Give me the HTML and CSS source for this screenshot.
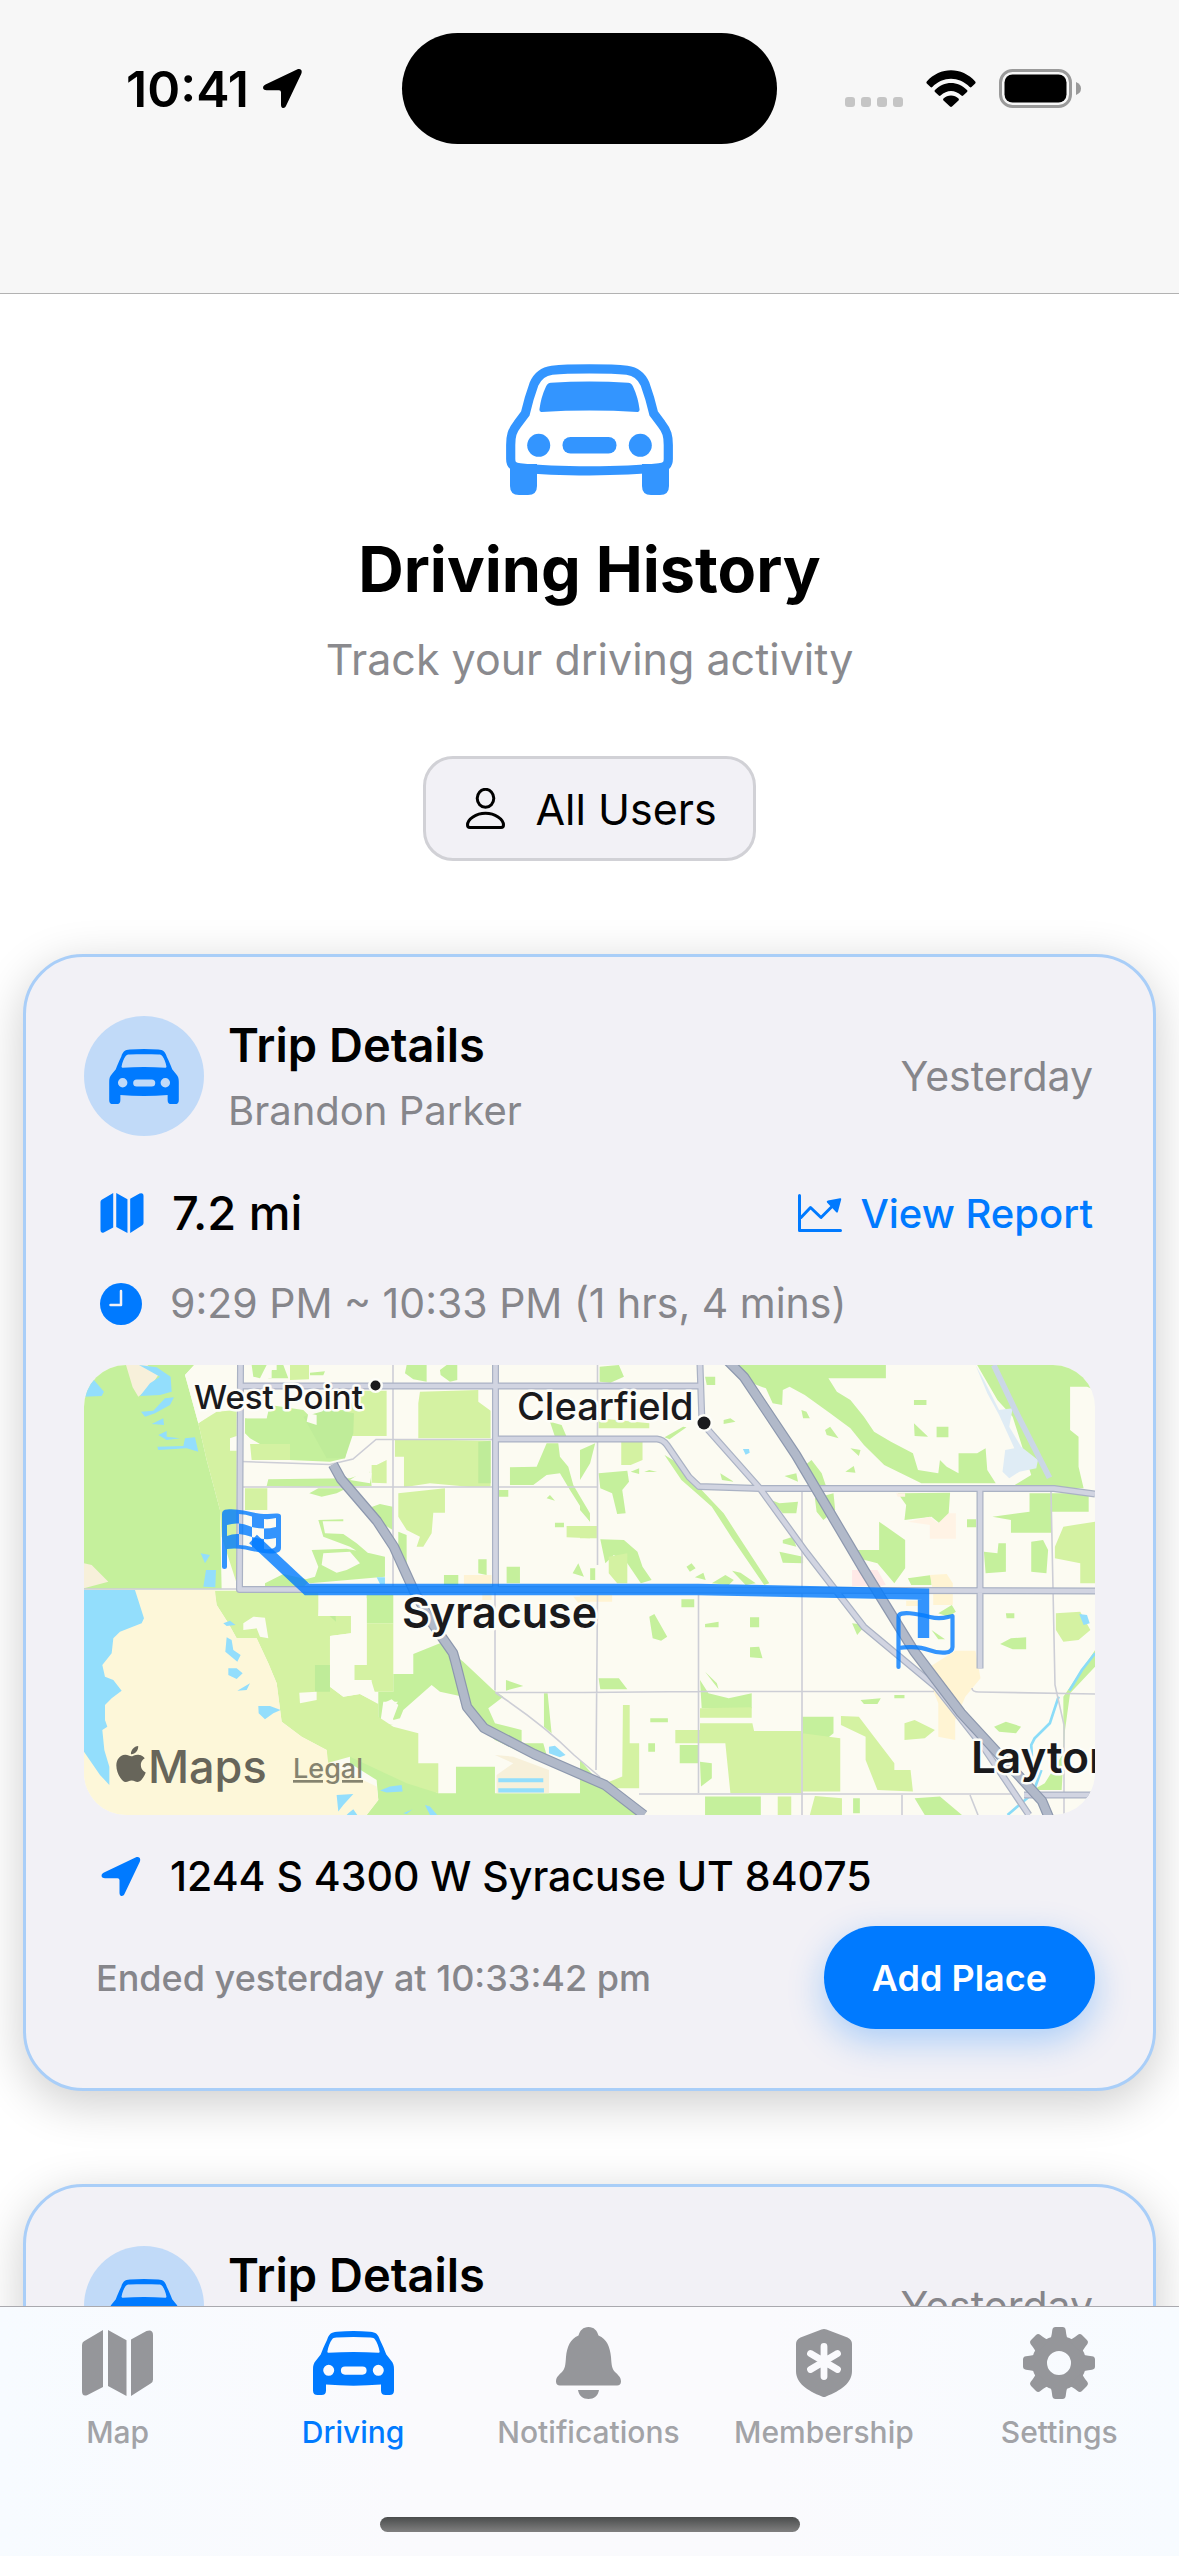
FILE: index.html
```html
<!DOCTYPE html>
<html lang="en">
<head>
<meta charset="utf-8">
<meta name="viewport" content="width=device-width, initial-scale=1">
<title>Driving History</title>
<link rel="stylesheet" href="styles.css">
</head>
<body>
<svg class="defs" aria-hidden="true">
  <symbol id="car-fill" viewBox="0 0 81 64">
    <path fill-rule="evenodd" d="M14 9C16 3 18 1.200 24 .7 35-.2 46-.2 57 .7 63 1.200 65 3 67 9 70 15 71.500 19 73.300 23.500L78 29.500C80.500 32.500 81 34.500 81 38.500V59.500C81 62.500 79.500 64 76.500 64H72.500C69.500 64 68 62.500 68 59.500V53.500C50 55 31 55 13 53.500V59.500C13 62.500 11.500 64 8.500 64H4.500C1.500 64 0 62.500 0 59.500V38.500C0 34.500 .5 32.500 3 29.500L7.700 23.500C9.500 19 11 15 14 9ZM19 8.500C17 11 15.200 16 14.400 20.500 14.300 21.500 14.700 21.800 15.600 21.700 32 20.700 49 20.700 65.400 21.700 66.300 21.800 66.700 21.500 66.600 20.500 65.800 16 64 11 62 8.500 61 7 60 6.600 57.500 6.500 46 5.800 35 5.800 23.500 6.500 21 6.600 20 7 19 8.500ZM15.700 33.800A5.500 5.500 0 1 0 15.700 44.800 5.500 5.500 0 1 0 15.700 33.800ZM65.300 33.800A5.500 5.500 0 1 0 65.300 44.800 5.500 5.500 0 1 0 65.300 33.800ZM32 35.500A4 4 0 0 0 32 43.700H49.500A4 4 0 0 0 49.500 35.500Z"/>
  </symbol>
  <symbol id="map-fill" viewBox="0 0 71 66">
    <path d="M21 0V57L5.500 65Q0 67 0 61V15Q0 12.500 2 11.300ZM26 0 44.500 10.300V66L26 56ZM49 9.500 64.500 1Q71-1 71 5V49.500Q71 52 69 53.300L49 66Z"/>
  </symbol>
  <symbol id="arrow-fill" viewBox="0 0 39 39">
    <path d="M34 .6 2.500 15.600C.3 16.800-.2 18.300.2 19.600.6 20.800 1.800 21.200 3.500 21.200H16Q18 21.200 18 23.200V35.500C18 37.300 18.400 38.500 19.700 38.900 21 39.200 22.200 38.600 23.200 36.500L38.200 5C39.800 1.500 37.500-1 34 .6Z"/>
  </symbol>
</svg>

<div class="app">
  <header class="topbar">
    <div class="status">
      <div class="status-side status-left">
        <span class="clock">10:41</span>
        <svg class="status-arrow" viewBox="0 0 39 39"><use href="#arrow-fill"/></svg>
      </div>
      <div class="island"></div>
      <div class="status-side status-right">
        <svg class="dots" viewBox="0 0 58 37"><rect y="27" width="10" height="10" rx="3"/><rect x="16" y="27" width="10" height="10" rx="3"/><rect x="32" y="27" width="10" height="10" rx="3"/><rect x="48" y="27" width="10" height="10" rx="3"/></svg>
        <svg class="wifi" viewBox="0 0 50 37"><path d="M.8 11.500C14-3.500 36-3.500 49.200 11.500Q50 12.500 49.200 13.400L45.500 17Q44.600 17.800 43.700 17C33 6 17 6 6.300 17Q5.400 17.800 4.500 17L.8 13.400Q0 12.500.8 11.500ZM9 20C18 10.500 32 10.500 41 20Q41.900 21 41 22L37.200 25.500Q36.300 26.300 35.400 25.500C29 19.500 21 19.500 14.600 25.500Q13.700 26.300 12.800 25.500L9 22Q8.100 21 9 20ZM17.500 28.500C21.500 24.500 28.500 24.500 32.500 28.500Q33.300 29.500 32.500 30.400L26 36.600Q25 37.400 24 36.600L17.500 30.400Q16.700 29.500 17.500 28.500Z"/></svg>
        <svg class="battery" viewBox="0 0 82 39"><rect x="1.500" y="1.500" width="70" height="36" rx="12" fill="none" stroke="#9a9a9a" stroke-width="3"/><rect x="5.500" y="5.500" width="62" height="28" rx="8"/><path d="M77 13Q82 15 82 19.500T77 26Z" fill="#9a9a9a"/></svg>
      </div>
    </div>
  </header>

  <main class="content">
    <section class="hero">
      <svg class="hero-car" viewBox="0 0 167 131">
        <path fill="none" stroke="currentColor" stroke-width="9.200" d="M83.500 4.800C68 4.800 55 5.200 46 6.200 36 7.500 31 13 28 20 24 31 21.500 40 19.300 49.500L11.500 60C6 67 4.700 72 4.700 81V95C4.700 101 7.500 103.200 14 103.800 34 106 60 106.800 83.500 106.800S133 106 153 103.800C159.500 103.200 162.300 101 162.300 95V81C162.300 72 161 67 155.500 60L147.700 49.500C145.500 40 143 31 139 20 136 13 131 7.500 121 6.200 112 5.200 99 4.800 83.500 4.800Z"/>
        <path d="M45 18.700Q83.500 16.400 122 18.700 125.500 19 127 22.500 132 33 133.600 45.500 133.700 48 131.500 47.900 83.500 45 35.500 47.900 33.300 48 33.400 45.500 35 33 40 22.500 41.500 19 45 18.700ZM4 100H31V122Q31 131 22 131H13Q4 131 4 122ZM136 100H163V122Q163 131 154 131H145Q136 131 136 122Z"/>
        <circle cx="32.700" cy="81.300" r="11.500"/><circle cx="134.300" cy="81.300" r="11.500"/><rect x="56.500" y="73" width="54" height="16.500" rx="8"/>
      </svg>
      <h1 class="hero-title">Driving History</h1>
      <p class="hero-sub">Track your driving activity</p>
      <button class="filter" type="button">
        <svg class="person" viewBox="0 0 39 41"><ellipse cx="19.500" cy="10.300" rx="8.300" ry="9"/><path d="M19.500 25.300C29 25.300 37.500 31 37.500 37Q37.500 39.500 35 39.500H4Q1.500 39.500 1.500 37C1.500 31 10 25.300 19.500 25.300Z"/></svg>
        <span>All Users</span>
      </button>
    </section>

    <section class="trips">
      <article class="card">
        <div class="card-head">
          <span class="badge"><svg class="badge-car"><use href="#car-fill"/></svg></span>
          <div class="who">
            <h2 class="card-title">Trip Details</h2>
            <p class="name">Brandon Parker</p>
          </div>
          <span class="muted">Yesterday</span>
        </div>
        <div class="row stats">
          <svg class="icon-map"><use href="#map-fill"/></svg>
          <span class="distance">7.2 mi</span>
          <a class="report" href="#report">
            <svg class="icon-chart" viewBox="0 0 44 38"><path fill="none" stroke="currentColor" stroke-width="3" stroke-linecap="round" stroke-linejoin="round" d="M1.500 1.500V36.500H42.500M3 23.500 12.500 13.500 23 23.500 36 10.500"/><path fill="currentColor" d="M29 8.500Q28 7 30 6.500L42 4.200Q43.500 4 43.200 5.500L40 17.500Q39.500 19.500 38 18Z"/></svg>
            <span>View Report</span>
          </a>
        </div>
        <div class="row times">
          <svg class="icon-clock" viewBox="0 0 42 42"><circle cx="21" cy="21" r="21" fill="#007aff"/><path fill="none" stroke="#f2f1f6" stroke-width="2.500" stroke-linecap="round" stroke-linejoin="round" d="M21 8V22H10.500"/></svg>
          <span class="muted">9:29 PM ~ 10:33 PM (1 hrs, 4 mins)</span>
        </div>

        <svg class="map" viewBox="0 0 1011 450" role="img" aria-label="Route map">
          <rect width="1011" height="450" fill="#fcfbf2"/>
          <!-- land cover, west half -->
          <g transform="translate(-14 -15) scale(.3333)">
            <g fill="#c5f09c">
              <path d="M42 45H372L345 75 352 100 385 220 410 330 450 480 455 718H42Z"/>
              <path d="M545 45H590L570 85 550 80ZM595 85H655L640 45H620V60H605ZM720 68L765 64 760 76H720ZM1010 45H1070V95L1030 88 1005 70ZM1110 60 1130 45H1162V90L1140 95 1112 75ZM525 205H590L600 165 700 180 740 220 760 180 850 180 845 240 825 325 780 335 660 330 660 282 570 282 540 265 525 250ZM595 388 840 385 900 365 905 408 720 410 590 408ZM718 430 745 415H830L800 430 755 440ZM880 480 930 462 968 470V540L920 510ZM725 600 830 596 900 610 945 620V680L720 700 700 690 735 680 745 650ZM745 510 820 508 820 514H758L765 550 820 552 860 580 895 610 880 615 840 590 760 560ZM585 700 640 672 720 690 700 712H585ZM985 545 1010 555V640L985 600ZM1225 628H1250V675L1225 670ZM1122 675H1165V705H1122ZM1320 352 1400 350 1430 280 1465 280 1470 320 1495 350 1510 405 1560 490V515L1500 420 1470 370 1430 375 1390 405 1320 405ZM1440 215 1475 225 1490 260H1455ZM1285 420H1315V440H1285ZM1430 445 1440 435 1455 452ZM1455 518H1482V532H1455ZM1310 650H1350V700H1310ZM1508 670 1525 640 1542 680ZM890 735H970V820H890ZM760 780 795 765 798 815 760 810ZM690 768H742V796H690ZM800 880 842 890 820 905 795 895ZM1030 912 1110 880 1180 935 1270 1020 1300 1040 1255 1075 1275 1120 1355 1140V1180L1420 1180 1430 1215 1370 1215 1275 1170 1210 1110 1180 1040 1110 1025 1085 1005 1000 1080 990 1105 970 1110 965 1070 985 1055 940 1055 930 1125 970 1125 925 1120 925 1025H970V972H1030ZM735 945H780V1025H735ZM1308 990 1360 1008 1308 1022ZM1422 1030H1433L1440 1100 1445 1150 1422 1130ZM840 1215 1010 1285 1105 1330 1158 1330V1250H1275V1330H1560V1395H890L925 1350 920 1290 840 1240Z"/>
            </g>
            <g fill="#d4f2a2">
              <path d="M385 220 440 185 500 180V258L480 265V302H500V700L455 560 450 480 410 330ZM660 45H717V88L660 90ZM528 300 540 282H660V330H528ZM525 415H592V480H525ZM830 180 870 122H950V258H830ZM1050 125 1225 120V155L1262 182V265H1045V160ZM1000 268 1262 272V410H1195L1080 400 1002 412V320H975V270ZM905 345H920L950 330V400L905 398ZM985 430 1125 415V488H1090L1085 550 1060 590 1040 590 1050 560 1010 540 985 500ZM1490 528H1560V565L1490 562ZM433 722H745V798H843V850L780 858V1010L820 1040 870 1032 925 1062V1100L970 1130 1045 1150V1240H1105V1330L1010 1300 840 1220 770 1240V1200L695 1160 635 1115 620 1000 595 940 560 865H500L475 820 440 765ZM853 945H890V820H970V1025H905V990H853Z"/>
            </g>
            <path fill="#bfec99" d="M700 200 770 325 825 325 850 250 852 190 780 178ZM1262 272 1225 275V400H1262ZM760 780 795 765 798 815ZM735 945H780V1025H735Z"/>
            <path fill="#fcfbf2" d="M345 75 375 45 400 60 410 100 440 180 385 220 355 110ZM545 178H590V205H530ZM715 190 740 195V225L710 215ZM590 60H605V84H590ZM525 285 540 280 545 330H525ZM525 340 660 345V375L590 380V388H525ZM840 390 885 360 905 370 900 400ZM760 610 840 605 870 640 830 660 800 668 755 645ZM520 820 550 800 585 803 595 865 570 860 560 835 520 840ZM688 1028 740 1025V1050L690 1060ZM940 1060 965 1048 985 1065 970 1105 940 1080ZM750 745H890V945H853V990L905 995 925 1060 870 1032 820 1040 780 1010V858L843 850V798H745Z"/>
            <path fill="#f7f0da" d="M168 45H232L265 75 240 112 205 140 188 112ZM42 640 65 645 115 695 42 715ZM1275 1215 1330 1220 1437 1260V1330H1280V1275L1330 1240Z"/>
            <path fill="#fdf7d9" d="M42 720H435L440 765 475 820 500 865H560L595 940 620 1000 635 1115 695 1160 770 1200 775 1240 920 1310 925 1350 890 1395H42Z"/>
            <path fill="#ffefc8" opacity=".7" d="M1182 675H1265V750H1237V710H1182ZM1510 740H1560V765H1530Z"/>
            <path fill="#93defc" d="M42 85 70 88 102 125 95 138 42 140ZM207 45 260 52 302 80 305 125 270 135 210 138 240 100 270 80ZM213 185 250 182 285 145 312 142 300 165 255 190 225 200ZM245 222 280 205 282 225ZM265 255 290 243 290 260 330 265 290 270ZM262 290 340 288 345 265 375 262 385 305 350 295 265 300ZM392 610 420 615 405 640ZM408 660H438L436 712 400 710ZM920 682H945V702H930ZM42 720H195L222 805 215 820 150 845 130 865 125 910 97 945 105 980 130 990 155 1022 125 1045 105 1065V1110L112 1130 97 1140 103 1200 118 1250V1305L90 1275 42 1205ZM460 820 480 812 497 825 470 828ZM470 862 485 870 490 900 512 915 502 935 466 905ZM475 955 500 955 518 970 500 987 475 975ZM502 1022 540 1000 530 1020ZM565 1068 600 1068 632 1080 610 1090 585 1108 566 1090ZM800 1335 850 1332 820 1365 805 1385ZM835 1390 850 1378 862 1395H830ZM930 1322 960 1310 995 1305 998 1325 950 1328ZM1000 1390 1028 1378 1010 1392ZM1065 1365 1080 1370 1102 1395H1080ZM1285 1285H1420V1297H1285ZM1285 1315H1422V1328H1285ZM1437 1190 1455 1187 1487 1215 1470 1222 1437 1210Z"/>
          </g>
          <!-- land cover, east half -->
          <g transform="translate(496 -15) scale(.338 .3333)">
            <g fill="#c5f09c">
              <path d="M465 45H905V85H735L760 125 800 150 840 200 870 245 920 275 985 310 1000 360 1060 370 1065 330 1085 350 1120 370 1120 310H1175L1200 295 1205 360 1230 400H1010L900 345 840 285 800 235 740 190 665 135 620 110 600 120 598 165 570 160 550 115 510 100ZM1175 45H1430Q1490 60 1524 120L1500 110H1450V240L1475 260V350L1490 415H1270L1335 375 1280 200 1235 150ZM58 50 115 45 130 80 90 98 58 95ZM370 80H400V105H375ZM250 262 305 230 315 232 265 268ZM425 210 445 205 460 215 425 222ZM655 180 670 185 680 205 660 205ZM725 240 740 230 765 265 730 255ZM988 150H1025V165H988ZM988 220 1030 260 990 258ZM1055 230H1090V262H1055ZM800 295 830 300 825 318ZM785 365 810 348 815 368ZM660 350 685 330 715 370 730 415 690 400ZM415 370 455 395 420 390ZM605 378 640 370 645 395ZM250 315 275 330 355 415 425 490 470 560 560 700 545 705 450 565 390 470 345 430 300 390ZM55 370 140 362 145 395 125 420 135 490 110 492 95 430 60 415ZM205 360 228 366H190ZM150 365 175 355V372ZM590 460 645 455 640 490 600 490 565 450ZM695 445 750 430 755 480 720 510 700 485ZM600 570 630 560 640 590 600 580ZM590 605 660 620V640L600 638ZM885 515 962 570V655L930 700 880 640 805 620V600H885ZM940 430 1095 428 1090 500 1070 525 1040 500 960 510 965 465ZM1145 508H1172V532H1145ZM1220 500 1330 485V430H1505V485H1395V548H1275V510ZM1195 605 1235 610 1238 580H1260V665L1200 670ZM1335 575 1370 570 1385 600 1380 670 1335 665ZM60 568 130 570 170 605 185 650 212 690 180 700 140 640 100 615 75 640ZM315 650 330 640 342 655 325 665ZM340 682 365 668 372 690ZM390 700 430 675 455 690 440 705ZM450 662 475 668 520 700 490 705ZM970 685 1040 675V705H980ZM300 748H338V772H300ZM370 822 410 815V832H370ZM503 802H530V832H503ZM205 800 220 792 258 860 240 872 215 865ZM503 892 530 890 540 925 503 922ZM55 985H115L140 1018 60 1018ZM370 965 405 1000 410 1018ZM355 990 380 1030 440 1045 508 1030V1075H360ZM805 820 845 825 820 855ZM1040 840 1080 868H1060ZM1060 790 1100 765 1112 785 1090 800ZM1260 790H1285V805H1262ZM1243 882 1275 865 1320 862V898H1280ZM1225 1130 1260 1115 1305 1130 1290 1150 1240 1145ZM830 1050 890 1045 880 1062H840ZM930 1035H960V1045H930ZM0 300 45 280 30 340 0 390ZM0 460 20 475 30 515 0 480ZM30 655H45V690H30ZM0 1230 60 1300 170 1395H0ZM295 1185H350V1240H295ZM202 1180H222V1205H202ZM208 1105H260V1117H208ZM355 1235 390 1240V1285L358 1310ZM658 1100H750V1150L700 1190 660 1170ZM370 1340H535V1395H370ZM990 1345 1065 1340 1130 1395H1020ZM808 1345H828V1390H808ZM1375 1300 1430 1210 1430 1040 1524 900 1524 950 1450 1030 1435 1140 1425 1320 1340 1320ZM1505 100H1524V140Z"/>
            </g>
            <g fill="#d4f2a2">
              <path d="M55 205 205 220V235H55ZM122 275H185V330L150 345H122ZM0 528H50V565H0ZM85 620 140 610V700H110L85 670ZM355 1075 508 1072V1103H355ZM127 1065H147V1180H175V1315H75V1300L125 1280ZM282 1140H355V1180H282ZM355 1120H510L515 1143H655V1330H445L430 1180H355ZM658 1150 770 1165V1325H658ZM772 1098 825 1100 870 1160 930 1240V1260H978L985 1325 880 1320 845 1230V1160L772 1125ZM960 1120 990 1110 1050 1140 1020 1165 960 1170ZM585 1340H625V1395H585ZM695 1338 775 1345V1395H680ZM1405 590 1430 530 1524 515V700H1480V640L1405 625ZM1408 790 1480 785 1510 840 1475 870 1430 875 1408 840Z"/>
            </g>
            <path fill="#fff4d3" d="M1035 675 1085 672 1103 700V765H1045V725ZM1110 902H1170L1185 985 1140 1040 1110 1110V1170L1060 1160 1060 1060 1020 960ZM965 752H1000V768H965ZM0 735H95V755H0Z"/>
            <path fill="#fff3e5" d="M970 515 1035 500 1060 520 1090 490H1112V566H1035V525ZM935 430H962V440H940Z"/>
            <path fill="#ffe9e7" d="M805 660H880L905 705 890 708H805Z"/>
            <path fill="#dfecf5" d="M1170 45 1195 90 1240 180 1280 175 1270 230 1305 290 1355 330 1350 355 1300 365 1270 385 1250 365 1258 300 1285 295 1240 195 1205 130Z"/>
            <path fill="none" stroke="#cbd7e6" stroke-width="17" d="M1224 45 1290 185 1389 383"/>
            <path fill="#93defc" d="M482 297H500L502 308 490 314ZM1477 792 1500 795 1508 820 1490 825Z"/>
            <path fill="none" stroke="#8adcf8" stroke-width="8" d="M1524 910 1485 960 1448 1022M1416 1040 1390 1120 1345 1165 1335 1185 1337 1220M1365 1260 1340 1330 1265 1395"/>
          </g>
          <!-- minor streets -->
          <g fill="none" stroke="#cdced6" stroke-width="1.600">
            <path d="M0 224H154M157 96.500 246 99.500 269 94 292 74.500H409M157 122H513M309 0V224M411 225V325.500M411 327.500H500L614 326.500H850M412 328Q460 360 490 390L516 412M513.500 0V200M513.500 230 512 405M614.500 230V428M718 127V450M967 127 971 320 980 360V450M888 323Q888 327 895 327L1011 329M555 429H933M818 430V450M886 430 894 450"/>
          </g>
          <!-- main roads with casing -->
          <g fill="none" stroke-linejoin="round">
            <path stroke="#aab2c4" stroke-width="7" d="M156.500 0 155.500 224.500H412L1011 226M157 21H616M411.500 0V224M616 0 618 58M412 74H573Q579 74.500 583 80L605 112 615 121.500 676 123.500H970L1011 129M896 123.500V303.500M618 58 676 123.500 722 187 780 262 852 322 900 383 945 450M940 430H1011"/>
            <path stroke="#d1d4e1" stroke-width="4.600" d="M156.500 0 155.500 224.500H412L1011 226M157 21H616M411.500 0V224M616 0 618 58M412 74H573Q579 74.500 583 80L605 112 615 121.500 676 123.500H970L1011 129M896 123.500V303.500M618 58 676 123.500 722 187 780 262 852 322 900 383 945 450M940 430H1011"/>
            <path stroke="#8d98ae" stroke-width="10.400" d="M249 99.500 257 114 293 156 310 182 330 226 348 258 369 288 371 295 383 342 400 363 450 389 521 420 560 450M643-5 660 12 712 90 780 205 830 286 877 348 958 436 966 455"/>
            <path stroke="#b1b9c9" stroke-width="8" d="M249 99.500 257 114 293 156 310 182 330 226 348 258 369 288 371 295 383 342 400 363 450 389 521 420 560 450M643-5 660 12 712 90 780 205 830 286 877 348 958 436 966 455"/>
          </g>
          <!-- finish and start flags -->
          <path fill="#007aff" fill-opacity=".8" fill-rule="evenodd" d="M138 149Q138 144.500 143 144.500C160 143 170 151 192 148.500Q197 148 197 151V183Q197 187 192 188C176 191 162 181 143 184V202Q143 204 140.500 204T138 202ZM143 160V171Q149 168.500 155 169V158.500Q149 158 143 160ZM155 149V158.500Q161 159 168 162V151.500Q162 149 155 149ZM168 162V172Q174 174 180 174V163.500Q174 163.500 168 162ZM180 154V163.500Q186 163.500 192 162V153Q186 154.500 180 154ZM155 169V180Q161 180 168 182V172Q161 169.500 155 169ZM180 174V184Q186 185 190 183Q192 182 192 180V173Q186 174.500 180 174Z"/>
          <path fill="none" stroke="#007aff" stroke-opacity=".8" stroke-width="4.200" stroke-linecap="round" stroke-linejoin="round" d="M814.500 302V252C814.500 245 834 249 846 252S862 252 868.500 251V282C868.500 289 856 289 845 285S820 282 815 283"/>
          <path fill="none" stroke="#007aff" stroke-opacity=".8" stroke-width="11.400" d="M169 174 223 224.500H614L839.500 229V273"/>
          <!-- place names -->
          <g class="places">
            <text x="110" y="44" font-size="33">West Point</text>
            <text x="433" y="55" font-size="38">Clearfield</text>
            <text class="strong" x="318" y="263" font-size="43">Syracuse</text>
            <text class="strong" x="887" y="408" font-size="44">Layton</text>
            <circle cx="291.500" cy="20.500" r="5"/><circle cx="620" cy="58" r="6.500"/>
          </g>
          <g fill="#67655a">
            <path transform="translate(29 381) scale(1.500)" d="M12.152 6.896c-.948 0-2.415-1.078-3.960-1.040-2.040.027-3.910 1.183-4.961 3.014-2.117 3.675-.546 9.103 1.519 12.090 1.013 1.454 2.208 3.090 3.792 3.039 1.520-.065 2.090-.987 3.935-.987 1.831 0 2.350.987 3.960.948 1.637-.026 2.676-1.480 3.676-2.948 1.156-1.688 1.636-3.325 1.662-3.415-.039-.013-3.182-1.221-3.220-4.857-.026-3.040 2.480-4.494 2.597-4.559-1.429-2.090-3.623-2.324-4.390-2.376-2-.156-3.675 1.090-4.610 1.090zM15.530 3.830c.843-1.012 1.400-2.427 1.245-3.830-1.207.052-2.662.805-3.532 1.818-.780.896-1.454 2.338-1.273 3.714 1.338.104 2.715-.688 3.559-1.701"/>
            <text class="brand" x="64" y="418" font-size="45">Maps</text>
            <a href="#legal"><text class="legal" x="209" y="413" font-size="27">Legal</text></a>
          </g>
        </svg>

        <div class="row address">
          <svg class="icon-arrow"><use href="#arrow-fill"/></svg>
          <span class="street">1244 S 4300 W Syracuse UT 84075</span>
        </div>
        <div class="card-foot">
          <span class="ended">Ended yesterday at 10:33:42 pm</span>
          <button class="add" type="button">Add Place</button>
        </div>
      </article>

      <article class="card">
        <div class="card-head">
          <span class="badge"><svg class="badge-car"><use href="#car-fill"/></svg></span>
          <div class="who">
            <h2 class="card-title">Trip Details</h2>
            <p class="name">Brandon Parker</p>
          </div>
          <span class="muted">Yesterday</span>
        </div>
      </article>
    </section>
  </main>

  <nav class="tabbar">
    <div class="tabs">
      <a class="tab" href="#map"><span class="tab-icon"><svg class="t-map"><use href="#map-fill"/></svg></span>Map</a>
      <a class="tab active" href="#driving" aria-current="page"><span class="tab-icon"><svg class="t-car"><use href="#car-fill"/></svg></span>Driving</a>
      <a class="tab" href="#notifications"><span class="tab-icon"><svg class="t-bell" viewBox="0 0 65 72"><path d="M32.500 0C38 0 41 3.500 42.500 8.500 51 12 54 20 55 30 55.500 38 56 42 59 45 62 48 65 50 65 54.500 65 57 63.500 58.500 61 58.500H4C1.500 58.500 0 57 0 54.500 0 50 3 48 6 45 9 42 9.500 38 10 30 11 20 14 12 22.500 8.500 24 3.500 27 0 32.500 0ZM22 63H43C42 69 38 72 32.500 72S23 69 22 63Z"/></svg></span>Notifications</a>
      <a class="tab" href="#membership"><span class="tab-icon"><svg class="t-shield" viewBox="0 0 56 68"><path d="M25.500.5Q28-.5 30.500.5L51.500 8.500Q56 10.500 56 15V42C56 54 45 61.500 30 67.500Q28 68.500 26 67.500C11 61.500 0 54 0 42V15Q0 10.500 4.500 8.500Z"/><path stroke="#fafafd" stroke-width="6.800" stroke-linecap="round" d="M28 17.500V47.500M14.500 24.500 41.500 40.500M41.500 24.500 14.500 40.500"/></svg></span>Membership</a>
      <a class="tab" href="#settings"><span class="tab-icon"><svg class="t-gear" viewBox="0 0 72 72"><circle cx="36" cy="36" r="19.500" fill="none" stroke="currentColor" stroke-width="15"/><path id="tooth" d="M26.500 13Q28.500 11 29.300 3 29.700 0 32.500 0H39.500Q42.300 0 42.700 3 43.500 11 45.500 13Z"/><use href="#tooth" transform="rotate(45 36 36)"/><use href="#tooth" transform="rotate(90 36 36)"/><use href="#tooth" transform="rotate(135 36 36)"/><use href="#tooth" transform="rotate(180 36 36)"/><use href="#tooth" transform="rotate(225 36 36)"/><use href="#tooth" transform="rotate(270 36 36)"/><use href="#tooth" transform="rotate(315 36 36)"/></svg></span>Settings</a>
    </div>
    <div class="home-bar"></div>
  </nav>
</div>
</body>
</html>
```
FILE: styles.css
```css
* { box-sizing: border-box; }
body { margin: 0; background: #fff; color: #000; font-family: Inter, "Liberation Sans", sans-serif; }
h1, h2, p { margin: 0; }
a { text-decoration: none; }
button { font-family: inherit; cursor: pointer; }
svg { display: block; flex: none; fill: currentColor; }
.defs { position: absolute; width: 0; height: 0; }

.app { display: flex; flex-direction: column; height: 100vh; }

/* status bar */
.topbar { flex: none; height: 294px; background: #f7f7f7; border-bottom: 1px solid #b2b2b2; }
.status { display: grid; grid-template-columns: 1fr 375px 1fr; padding-top: 33px; }
.status-side { display: flex; align-items: center; height: 111px; }
.status-left { justify-content: flex-end; gap: 14px; padding-right: 100px; }
.status-right { justify-content: flex-end; gap: 23px; padding-right: 98px; }
.clock { font-size: 50px; line-height: 58px; font-weight: 600; }
.island { height: 111px; border-radius: 56px; background: #000; }
.status-arrow { width: 39px; height: 39px; }
.dots { width: 58px; height: 37px; color: #c5c5c5; }
.wifi { width: 50px; height: 37px; }
.battery { width: 82px; height: 39px; }

/* page content */
.content { flex: 1; min-height: 0; overflow-y: auto; scrollbar-width: none; }
.hero { display: flex; flex-direction: column; align-items: center; padding-top: 70px; }
.hero-car { width: 167px; height: 131px; color: #3395ff; }
.hero-title { margin-top: 35px; font-size: 63px; line-height: 78px; font-weight: 700; }
.hero-sub { margin-top: 24px; font-size: 43px; line-height: 54px; color: #8a8a8e; }
.filter { display: flex; align-items: center; gap: 30px; height: 105px; margin-top: 70px; padding: 0 36px 0 40px; border: 3px solid #d1d1d6; border-radius: 30px; background: #f2f1f6; color: #000; font-size: 43px; line-height: 54px; }
.person { width: 39px; height: 41px; fill: none; stroke: #000; stroke-width: 3px; }

.trips { display: flex; flex-direction: column; gap: 93px; padding: 93px 23px; }
.card { padding: 59px 58px; border: 3px solid #a9cef8; border-radius: 60px; background: #f2f1f6; box-shadow: 0 12px 48px rgba(0, 0, 0, .2); }
.card-head { display: flex; align-items: center; gap: 24px; padding-right: 2px; }
.badge { display: flex; align-items: center; justify-content: center; width: 120px; height: 120px; border-radius: 50%; background: #c1daf8; color: #007aff; }
.badge-car { width: 70px; height: 55px; }
.who { flex: 1; display: flex; flex-direction: column; gap: 11px; }
.card-title { font-size: 47px; line-height: 58px; font-weight: 600; }
.name { font-size: 40px; line-height: 51px; color: #86868b; }
.muted { font-size: 41px; line-height: 51px; color: #86868b; }
.row { display: flex; align-items: center; gap: 28px; padding-left: 16px; color: #007aff; }
.stats { margin-top: 48px; padding-right: 2px; }
.distance { color: #000; font-size: 47px; line-height: 58px; font-weight: 500; }
.report { display: flex; align-items: center; gap: 18px; margin-left: auto; color: #007aff; font-size: 40px; line-height: 51px; font-weight: 500; }
.icon-map { width: 44px; height: 40px; }
.icon-chart { width: 44px; height: 38px; }
.icon-clock { width: 42px; height: 42px; }
.icon-arrow { width: 42px; height: 39px; }
.times { margin-top: 36px; }
.map { width: 100%; height: auto; margin: 36px 0; border-radius: 42px; }
.places { fill: #1a1a1c; stroke: #fdfdf8; stroke-width: 5px; stroke-linejoin: round; paint-order: stroke; font-weight: 500; }
.strong { font-weight: 600; }
.brand { font-weight: 500; }
.legal { font-weight: 500; fill: #85836f; text-decoration: underline; }
.street { color: #000; font-size: 41px; line-height: 51px; font-weight: 500; }
.card-foot { display: flex; align-items: center; justify-content: space-between; margin-top: 24px; padding-left: 12px; }
.ended { font-size: 36px; line-height: 44px; font-weight: 500; color: #86868b; }
.add { height: 103px; padding: 0 48px; border: 0; border-radius: 52px; background: #007aff; color: #fff; font-size: 36px; line-height: 44px; font-weight: 600; box-shadow: 0 12px 36px rgba(0, 122, 255, .3); }

/* bottom tabs */
.tabbar { flex: none; display: flex; flex-direction: column; align-items: center; border-top: 1px solid #a9a9ae; background: linear-gradient(90deg, #f7fbff, #fafafd 35%, #fafafd 65%, #f7fbff); }
.tabs { display: grid; grid-template-columns: repeat(5, 1fr); width: 100%; padding: 20px 2px 0 0; }
.tab { display: flex; flex-direction: column; align-items: center; gap: 15px; color: #a2a3a7; font-size: 30px; line-height: 36px; font-weight: 500; }
.tab-icon { display: flex; align-items: center; height: 72px; color: #95969a; }
.active, .active .tab-icon { color: #007aff; }
.t-map { width: 71px; height: 66px; }
.t-car { width: 81px; height: 64px; }
.t-bell { width: 65px; height: 72px; }
.t-shield { width: 56px; height: 68px; }
.t-gear { width: 72px; height: 72px; }
.home-bar { width: 420px; height: 15px; margin: 67px 0 24px; border-radius: 8px; background: linear-gradient(#4a4c4c, #808080); }
```
